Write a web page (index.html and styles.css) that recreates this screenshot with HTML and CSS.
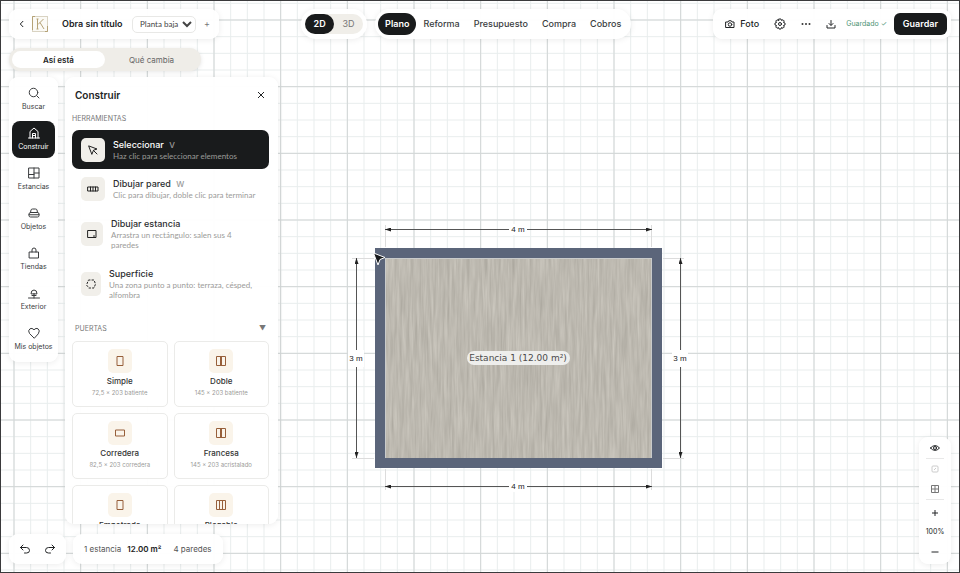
FILE: index.html
```html
<!DOCTYPE html>
<html lang="es">
<head>
<meta charset="utf-8">
<meta name="viewport" content="width=device-width, initial-scale=1">
<title>Obra sin título</title>
<link rel="stylesheet" href="styles.css">
</head>
<body>
<svg class="plan" role="img" aria-label="Plano de la estancia">
  <defs>
    <pattern id="minor" x="13.5" y="19.5" width="16.667" height="16.667" patternUnits="userSpaceOnUse">
      <path d="M0 .5H17M.5 0V17" fill="none" stroke="#e8eded"/>
    </pattern>
    <pattern id="major" x="13.5" y="19.5" width="66.667" height="66.667" patternUnits="userSpaceOnUse">
      <path d="M0 .5H67M.5 0V67" fill="none" stroke="#d2d6d6"/>
    </pattern>
    <filter id="grain" x="0" y="0" width="100%" height="100%" color-interpolation-filters="sRGB">
      <feTurbulence type="fractalNoise" baseFrequency="0.4 0.025" numOctaves="3" seed="8"/>
      <feColorMatrix values="0.15 0 0 0 0.665  0.15 0 0 0 0.65  0.15 0 0 0 0.615  0 0 0 0 1"/>
    </filter>
    <marker id="arrow" viewBox="0 0 6 4" refX="6" refY="2" markerWidth="6" markerHeight="4" markerUnits="userSpaceOnUse" orient="auto-start-reverse">
      <path d="M0 0L6 2L0 4Z" fill="#222"/>
    </marker>
  </defs>
  <rect width="100%" height="100%" fill="url(#minor)"/>
  <rect width="100%" height="100%" fill="url(#major)"/>
  <rect x="375" y="248" width="287" height="220" fill="#5b657a"/>
  <rect x="385" y="258" width="267" height="200" fill="#c9cbcb"/>
  <rect x="386" y="259" width="265" height="199" filter="url(#grain)"/>
  <path class="guide" d="M385.5 225V247M651.5 225V247M385.5 469V490M651.5 469V490M352 258.5H374M352 458.5H374M663 258.5H684M663 458.5H684"/>
  <g class="dimension">
    <line x1="385" y1="229.5" x2="652" y2="229.5"/>
    <line x1="385" y1="486.5" x2="652" y2="486.5"/>
    <line x1="356.5" y1="258" x2="356.5" y2="458"/>
    <line x1="680.5" y1="258" x2="680.5" y2="458"/>
  </g>
  <g fill="#fff">
    <rect x="509" y="224" width="18" height="11"/><rect x="509" y="481" width="18" height="11"/>
    <rect x="348" y="350" width="16" height="17"/><rect x="672" y="350" width="16" height="17"/>
  </g>
  <g class="measure">
    <text x="518" y="232">4 m</text><text x="518" y="489">4 m</text>
    <text x="356" y="361">3 m</text><text x="680" y="361">3 m</text>
  </g>
  <rect x="467" y="351" width="103" height="14" rx="7" fill="#eeeeec"/>
  <text class="room" x="518" y="361">Estancia 1 (12.00 m²)</text>
  <path d="M373.500 253L385 257.500L380 259.500L378 265Z" fill="#16181a" stroke="#fff"/>
</svg>

<div class="app">
  <header class="top">
    <div class="panel project">
      <button class="bare" aria-label="Volver"><svg class="i8" viewBox="0 0 8 8"><path d="M5.200 1L2.300 4L5.200 7"/></svg></button>
      <svg class="logo" viewBox="0 0 16 16"><rect x=".5" y=".5" width="15" height="15" fill="#fbfaf6" stroke="#d9d3c2"/><path d="M.5 14V.5H3M13 15.500H15.500V10M5.500 3V13M11.500 3L6 8.500M8 6.500L12 13M4.500 3H6.500M4.500 13H6.500" stroke="#b5a276"/></svg>
      <h1>Obra sin título</h1>
      <select aria-label="Planta"><option>Planta baja</option></select>
      <button class="bare plus" aria-label="Añadir planta">+</button>
    </div>
    <div class="center">
      <div class="panel round views"><div class="switch"><button class="on">2D</button><button>3D</button></div></div>
      <nav class="panel round tabs">
        <a href="#plano" class="on">Plano</a><a href="#reforma">Reforma</a><a href="#presupuesto">Presupuesto</a><a href="#compra">Compra</a><a href="#cobros">Cobros</a>
      </nav>
    </div>
    <div class="panel actions">
      <button class="bare photo"><svg class="i10" viewBox="0 0 20 20"><path d="M2 6H6L7.500 3.500H12.500L14 6H18V17H2Z"/><circle cx="10" cy="11" r="3.500"/></svg>Foto</button>
      <button class="bare" aria-label="Ajustes"><svg class="i12" viewBox="0 0 24 24"><circle cx="12" cy="12" r="3"/><path d="M10 2H14L15 5L18 3.500L20.500 6L19 9L22 10V14L19 15L20.500 18L18 20.500L15 19L14 22H10L9 19L6 20.500L3.500 18L5 15L2 14V10L5 9L3.500 6L6 3.500L9 5Z"/></svg></button>
      <button class="bare" aria-label="Más"><svg class="i10" viewBox="0 0 10 10"><g fill="#333" stroke="none"><circle cx="1.500" cy="5" r="1"/><circle cx="5" cy="5" r="1"/><circle cx="8.500" cy="5" r="1"/></g></svg></button>
      <button class="bare" aria-label="Descargar"><svg class="i10" viewBox="0 0 20 20"><path d="M10 3V12M6 9L10 13L14 9M2 13V18H18V13"/></svg></button>
      <span class="saved">Guardado ✓</span>
      <button class="save">Guardar</button>
    </div>
  </header>

  <main>
    <div class="left">
      <div class="state"><button class="on">Así está</button><button>Qué cambia</button></div>
      <div class="work">
        <nav class="panel rail">
          <a href="#buscar"><svg class="i12" viewBox="0 0 24 24"><circle cx="11" cy="11" r="8.500"/><path d="M17.500 17.500L22 22"/></svg>Buscar</a>
          <a href="#construir" class="on"><svg class="i12" viewBox="0 0 24 24"><path d="M1 22H23M4 22V9L12 2L20 9V22M9 22V13H15V22M9 17H15"/></svg>Construir</a>
          <a href="#estancias"><svg class="i12" viewBox="0 0 24 24"><path d="M2 2H22V22H2ZM12 2V22M12 12H22M2 15H12"/></svg>Estancias</a>
          <a href="#objetos"><svg class="i12" viewBox="0 0 24 24"><path d="M5 11L6 6Q6.500 4 9 4H15Q17.500 4 18 6L19 11M5 11H19Q22 11 22 14V17Q22 20 19 20H5Q2 20 2 17V14Q2 11 5 11ZM2 15.500H22"/></svg>Objetos</a>
          <a href="#tiendas"><svg class="i12" viewBox="0 0 24 24"><path d="M3 10H21V22H3ZM8 10V6Q8 2 12 2Q16 2 16 6V10"/></svg>Tiendas</a>
          <a href="#exterior"><svg class="i12" viewBox="0 0 24 24"><path d="M1 22H23M12 22V13M6 13Q6 6 12 6Q18 6 18 13ZM8 17H16"/></svg>Exterior</a>
          <a href="#mis-objetos"><svg class="i12" viewBox="0 0 24 24"><path d="M12 22L3 13Q-1 7 4 3.500Q8 1 12 5.500Q16 1 20 3.500Q25 7 21 13Z"/></svg>Mis objetos</a>
        </nav>
        <section class="panel build">
          <div class="title"><h2>Construir</h2><button class="bare" aria-label="Cerrar"><svg class="i8" viewBox="0 0 8 8"><path d="M1 1L7 7M7 1L1 7"/></svg></button></div>
          <h3>HERRAMIENTAS</h3>
          <div class="tools">
            <button class="tool on"><span class="tile"><svg class="i12" viewBox="0 0 24 24"><path d="M4 4L20 10L13 12.500L10 20ZM13 13L20 20"/></svg></span><span><b>Seleccionar <kbd>V</kbd></b><small>Haz clic para seleccionar elementos</small></span></button>
            <button class="tool"><span class="tile"><svg class="i12" viewBox="0 0 24 24"><path d="M2 8H22V16H2ZM7 8V16M12 8V16M17 8V16"/></svg></span><span><b>Dibujar pared <kbd>W</kbd></b><small>Clic para dibujar, doble clic para terminar</small></span></button>
            <button class="tool tall"><span class="tile"><svg class="i12" viewBox="0 0 24 24"><path d="M4 5H20V19H4ZM16 15V19"/></svg></span><span><b>Dibujar estancia</b><small>Arrastra un rectángulo: salen sus 4 paredes</small></span></button>
            <button class="tool tall narrow"><span class="tile"><svg class="i12" viewBox="0 0 24 24"><path d="M7 4L18 4L21 12L18 20L8 20L3 14Z" stroke-dasharray="3 4"/></svg></span><span><b>Superficie</b><small>Una zona punto a punto: terraza, césped, alfombra</small></span></button>
          </div>
          <h3 class="doors">PUERTAS <span>▼</span></h3>
          <div class="cards">
            <button><span class="tile"><svg class="i12" viewBox="0 0 12 12"><path d="M3 1.500H9V10.500H3Z"/></svg></span><b>Simple</b><small>72,5 × 203 batiente</small></button>
            <button><span class="tile"><svg class="i12" viewBox="0 0 12 12"><path d="M1.500 1.500H10.500V10.500H1.500ZM5.500 2V10M6.500 2V10"/></svg></span><b>Doble</b><small>145 × 203 batiente</small></button>
            <button><span class="tile"><svg class="i12" viewBox="0 0 12 12"><path d="M1.500 3H10.500V9H1.500Z"/></svg></span><b>Corredera</b><small>82,5 × 203 corredera</small></button>
            <button><span class="tile"><svg class="i12" viewBox="0 0 12 12"><path d="M1.500 1.500H10.500V10.500H1.500ZM5.500 2V10M6.500 2V10"/></svg></span><b>Francesa</b><small>145 × 203 acristalado</small></button>
            <button><span class="tile"><svg class="i12" viewBox="0 0 12 12"><path d="M3 1.500H9V10.500H3Z"/></svg></span><b>Empotrada</b></button>
            <button><span class="tile"><svg class="i12" viewBox="0 0 12 12"><path d="M1.500 1.500H10.500V10.500H1.500ZM4.500 2V10M7.500 2V10"/></svg></span><b>Plegable</b></button>
          </div>
        </section>
      </div>
      <footer>
        <div class="panel history">
          <button class="bare" aria-label="Deshacer"><svg class="i12" viewBox="0 0 24 24"><path d="M8 4L3 9L8 14M3 9H15Q21 9 21 15Q21 20 15 20H11"/></svg></button>
          <button class="bare" aria-label="Rehacer"><svg class="i12" viewBox="0 0 24 24"><path d="M16 4L21 9L16 14M21 9H9Q3 9 3 15Q3 20 9 20H13"/></svg></button>
        </div>
        <div class="panel stats"><span>1 estancia</span><strong>12.00 m²</strong><span class="walls">4 paredes</span></div>
      </footer>
    </div>
    <div class="panel zoom">
      <button class="bare" aria-label="Capas visibles"><svg class="i10" viewBox="0 0 20 20"><path d="M1 10Q10 0 19 10Q10 20 1 10Z"/><circle cx="10" cy="10" r="3"/></svg></button>
      <hr>
      <button class="bare faint" aria-label="Imagen de fondo"><svg class="i8" viewBox="0 0 8 8"><rect x="1" y="1" width="6" height="6" rx="1"/><path d="M3 5L5 3"/></svg></button>
      <button class="bare grid" aria-label="Cuadrícula"><svg class="i8" viewBox="0 0 8 8"><path d="M.5 .5H7.500V7.500H.5ZM4 1V7M1 4H7"/></svg></button>
      <hr>
      <button class="bare thick" aria-label="Acercar"><svg class="i8" viewBox="0 0 8 8"><path d="M1 4H7M4 1V7"/></svg></button>
      <span>100%</span>
      <button class="bare thick" aria-label="Alejar"><svg class="i8" viewBox="0 0 8 8"><path d="M.5 4H7.500"/></svg></button>
    </div>
  </main>
</div>
</body>
</html>
```
FILE: styles.css
```css
* { box-sizing: border-box; }
body { margin: 0; background: #fff; color: #222426; font: 9px/12px Inter, "Liberation Sans", sans-serif; }
button, select, kbd { font: inherit; color: inherit; }
button { margin: 0; padding: 0; border: 0; background: none; cursor: pointer; }
a { color: inherit; text-decoration: none; }
h1, h2, h3 { margin: 0; }
svg { flex: none; fill: none; stroke: currentColor; display: block; }
.i8 { width: 8px; height: 8px; }
.i10 { width: 10px; height: 10px; }
.i12 { width: 12px; height: 12px; }
[viewBox="0 0 20 20"], [viewBox="0 0 24 24"] { stroke-width: 2; stroke-linejoin: round; stroke-linecap: round; }

.plan { position: absolute; inset: 0; width: 100%; height: 100%; stroke: none; }
.guide { stroke: #dcdcdc; }
.dimension line { stroke: #555; marker-start: url(#arrow); marker-end: url(#arrow); }
.measure { font: 8px "Liberation Sans", sans-serif; fill: #222; text-anchor: middle; }
.room { font: 9px "DejaVu Sans", sans-serif; fill: #4b4b4b; text-anchor: middle; }

.app { position: relative; display: flex; flex-direction: column; gap: 9px; height: 100vh; padding: 8px; border: 1px solid #3a3a3c; }
.panel { background: rgba(255, 255, 255, .96); border-radius: 9px; box-shadow: 0 1px 6px rgba(0, 0, 0, .08); }
.round { border-radius: 15px; }
.bare { display: flex; align-items: center; justify-content: center; }

.top { display: flex; justify-content: space-between; align-items: center; }
.top .panel { display: flex; align-items: center; height: 30px; }
.project { width: 210px; padding: 0 9px; }
.logo { width: 16px; height: 16px; margin: 0 14px 0 6px; }
h1 { font-size: 9px; font-weight: 600; white-space: nowrap; }
select { width: 64px; height: 17px; margin-left: auto; padding: 0 0 0 3px; border: 1px solid #e8e8e6; border-radius: 5px; background: #fff; color: #444; font: 8px Lato, sans-serif; }
.plus { margin-left: 8px; color: #777; }
.center { display: flex; gap: 8px; }
.views { padding: 0 4px; }
.switch { display: flex; border-radius: 11px; background: #f0eee9; }
.switch button { width: 29px; height: 20px; border-radius: 10px; color: #777; }
.switch .on, .tabs .on { background: #191b1c; color: #fff; font-weight: 600; }
.tabs { padding: 0 3px; }
.tabs a { padding: 5px 7px; border-radius: 11px; font-weight: 500; color: #3a3c3e; }
.actions { gap: 15px; padding: 0 4px 0 12px; }
.photo { gap: 5px; font-weight: 500; }
.saved { margin: 0 -8px 0 -5px; font-size: 7px; color: #4e9476; }
.save { height: 22px; padding: 0 9px; border-radius: 6px; background: #191b1c; color: #fff; font-weight: 600; }

main { flex: 1; min-height: 0; display: flex; justify-content: space-between; align-items: flex-end; }
.left { display: flex; flex-direction: column; height: 100%; }
.state { display: flex; width: 192px; padding: 3px; margin-bottom: 6px; border-radius: 12px; background: #efede8; box-shadow: 0 1px 4px rgba(0, 0, 0, .1); }
.state button { flex: 1; height: 17px; border-radius: 9px; font-size: 8px; color: #666; }
.state .on { background: #fff; color: #222; font-weight: 600; }
.work { flex: 1; min-height: 0; display: flex; align-items: flex-start; gap: 7px; }

.rail { width: 49px; padding: 4px 3px; display: flex; flex-direction: column; gap: 3px; }
.rail a { display: flex; flex-direction: column; align-items: center; justify-content: center; gap: 3px; height: 37px; border-radius: 8px; font-size: 7px; line-height: 10px; color: #3a3c3e; white-space: nowrap; }
.rail .on { background: #191b1c; color: #fff; }

.build { width: 213px; max-height: 100%; padding: 8px 9px 0 7px; overflow: hidden; }
.title { display: flex; justify-content: space-between; align-items: center; height: 20px; padding: 0 4px 0 3px; }
h2 { font-size: 10px; font-weight: 600; }
h3 { margin: 8px 0 5px; font-size: 7px; font-weight: 400; color: #777; }
.tools { display: flex; flex-direction: column; }
.tool { display: flex; align-items: center; gap: 8px; height: 40px; padding: 0 12px 0 9px; border-radius: 7px; text-align: left; color: #2c2e30; }
.tool.on { height: 39px; background: #191b1c; color: #fff; }
.tool.tall { height: 50px; }
.tile { flex: none; display: flex; align-items: center; justify-content: center; width: 24px; height: 24px; border-radius: 5px; background: #f1efea; color: #222; }
.tall .tile { width: 22px; }
.narrow .tile { width: 20px; }
b { display: block; font-weight: 500; }
kbd { margin-left: 3px; font-size: 8px; color: #999; }
small { display: block; font: 8px/10px Lato, sans-serif; color: #9b9b99; }
h3.doors { display: flex; justify-content: space-between; margin: 14px 3px 6px; }
.cards { display: grid; grid-template-columns: 1fr 1fr; gap: 6px; }
.cards button { display: flex; flex-direction: column; align-items: center; height: 66px; padding-top: 7px; border: 1px solid #ebebe9; border-radius: 5px; background: #fff; }
.cards .tile { background: #faf4ea; color: #975f3a; margin-bottom: 2px; }
.cards b { font-size: 8px; color: #333; }
.cards small { font: 6px/12px Inter, sans-serif; }

footer { display: flex; gap: 7px; margin-top: 10px; }
footer .panel { display: flex; align-items: center; height: 30px; }
.history { width: 57px; justify-content: space-around; padding: 0 4px; }
.stats { gap: 6px; padding: 0 11px; font-size: 8px; color: #555; }
.stats strong { font-weight: 600; color: #222; }
.walls { margin-left: 6px; }
.zoom { width: 32px; padding-top: 1px; display: flex; flex-direction: column; align-items: center; font-size: 7px; line-height: 14px; }
.zoom .bare { width: 24px; height: 20px; }
.zoom hr { width: 18px; margin: 0; border: 0; border-top: 1px solid #e8e8e8; }
.zoom .thick { stroke-width: 1; height: 25px; }
.faint { color: #ccc; }
.grid { color: #777; }
```
